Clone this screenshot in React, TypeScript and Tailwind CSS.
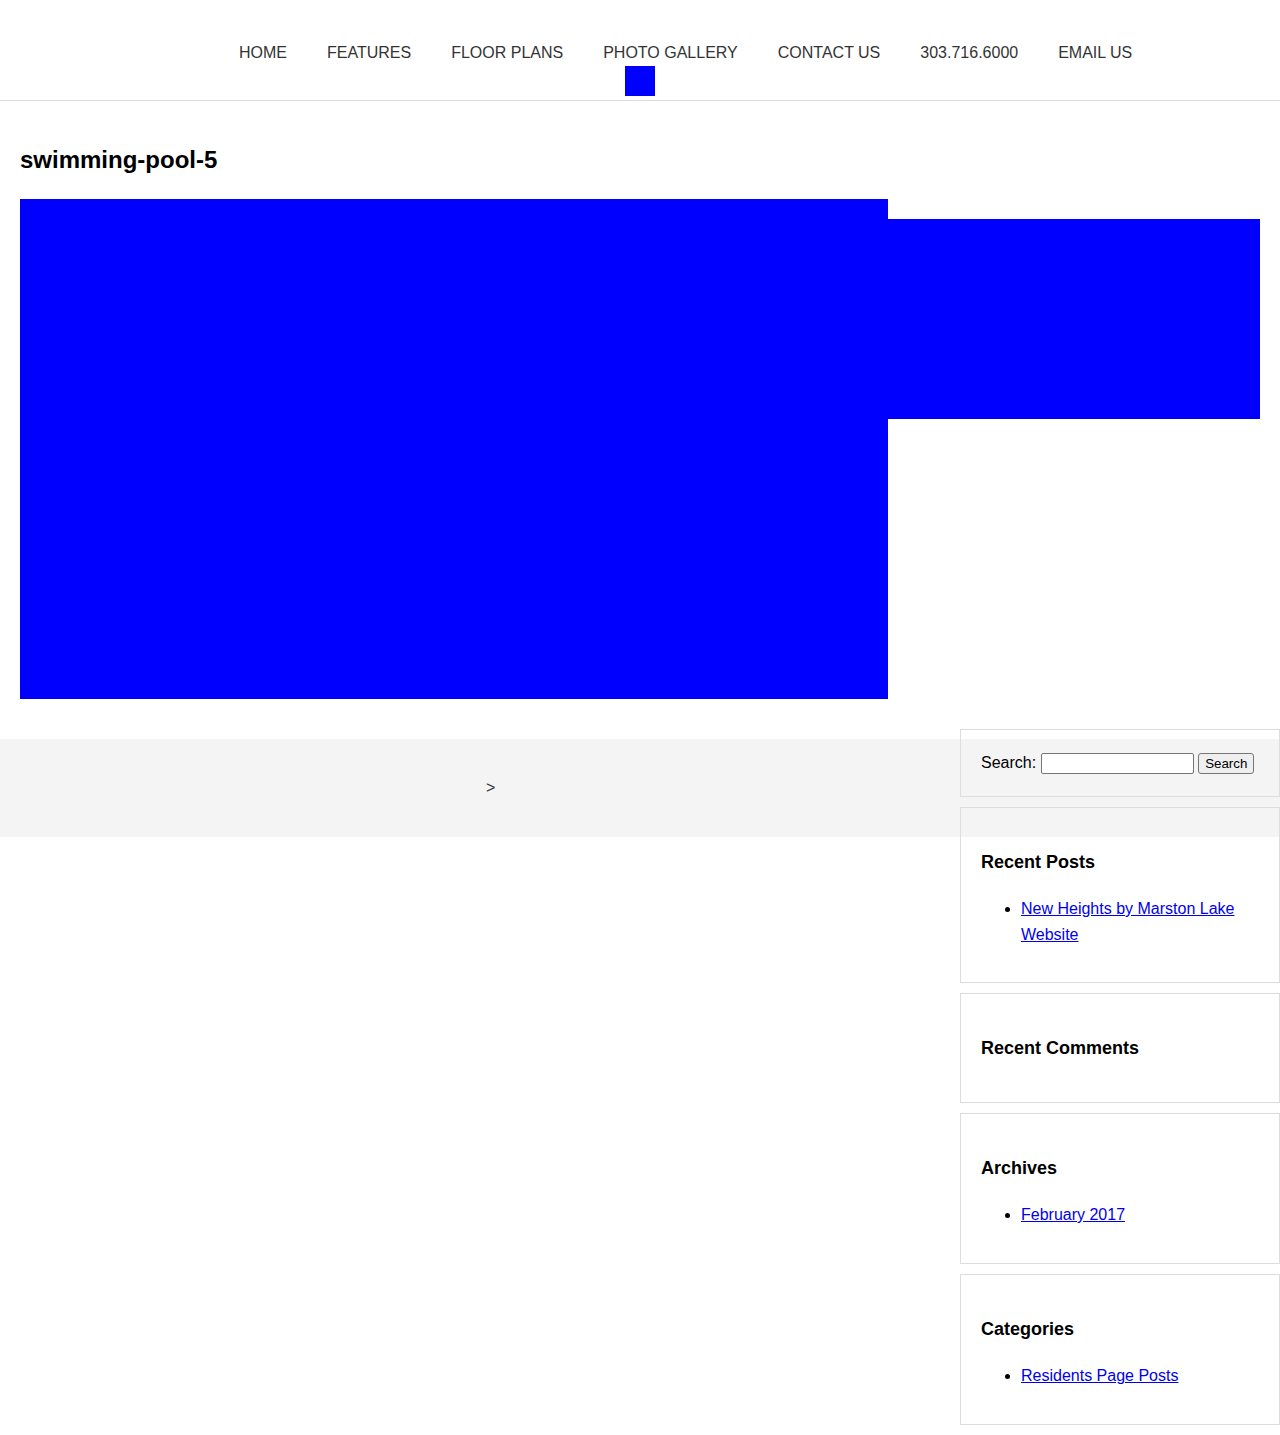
const navItems = ['HOME', 'FEATURES', 'FLOOR PLANS', 'PHOTO GALLERY', 'CONTACT US', '303.716.6000', 'EMAIL US'];

const Widget = ({ title, children }: { title: string; children?: React.ReactNode }) => (
  <div className="mb-[10px] border border-[#dddddd] px-5 py-5">
    <h3 className="my-5 text-[18px] leading-[28px] font-bold text-black">{title}</h3>
    {children}
  </div>
);

export default function App() {
  return (
    <div className="relative min-h-[1435px] bg-white text-black" style={{ fontFamily: '"Liberation Sans", Arial, sans-serif' }}>
      {/* Header */}
      <header className="border-b border-[#dddddd] pt-[44px] pb-[4px]">
        <nav className="flex h-[18px] items-center gap-[40px] pl-[239px] text-[16px] leading-[18px] text-[#333333]">
          {navItems.map((item) => (
            <a key={item} href="#" className="whitespace-nowrap">
              {item}
            </a>
          ))}
        </nav>
        <div className="mx-auto mt-[4px] h-[30px] w-[30px] bg-[#0000ff]" />
      </header>

      {/* Main content */}
      <main className="px-5 pt-[45px] pb-[40px]">
        <h1 className="text-[24px] leading-[28px] font-bold">swimming-pool-5</h1>
        <div className="mt-[25px] flex items-start">
          <div className="h-[500px] w-[868px] shrink-0 bg-[#0000ff]" />
          <div className="mt-5 h-[200px] flex-1 bg-[#0000ff]" />
        </div>
      </main>

      {/* Footer */}
      <footer className="flex h-[98px] items-center bg-[#f4f4f4] pl-[486px] text-[16px] text-[#333333]">
        &gt;
      </footer>

      {/* Sidebar */}
      <aside className="absolute top-[729px] right-0 w-[320px]">
        <div className="mb-[10px] border border-[#dddddd] px-5 py-5">
          <form className="flex h-[26px] items-center text-[16px]" onSubmit={(e) => e.preventDefault()}>
            <label className="mr-[5px]">Search:</label>
            <input type="text" className="h-[21px] w-[153px] rounded-[2px] border border-[#767676] bg-white" />
            <button type="submit" className="ml-[4px] h-[21px] rounded-[3px] border border-[#767676] bg-[#efefef] px-[6px] text-[13.33px] leading-[19px]">
              Search
            </button>
          </form>
        </div>

        <Widget title="Recent Posts">
          <ul className="mb-[14px] list-disc pl-10 text-[16px] leading-[26px]">
            <li>
              <a href="#" className="text-[#0000ee] underline">New Heights by Marston Lake Website</a>
            </li>
          </ul>
        </Widget>

        <Widget title="Recent Comments" />

        <Widget title="Archives">
          <ul className="mb-[15px] list-disc pl-10 text-[16px] leading-[26px]">
            <li>
              <a href="#" className="text-[#0000ee] underline">February 2017</a>
            </li>
          </ul>
        </Widget>

        <Widget title="Categories">
          <ul className="mb-[15px] list-disc pl-10 text-[16px] leading-[26px]">
            <li>
              <a href="#" className="text-[#0000ee] underline">Residents Page Posts</a>
            </li>
          </ul>
        </Widget>
      </aside>
    </div>
  );
}
